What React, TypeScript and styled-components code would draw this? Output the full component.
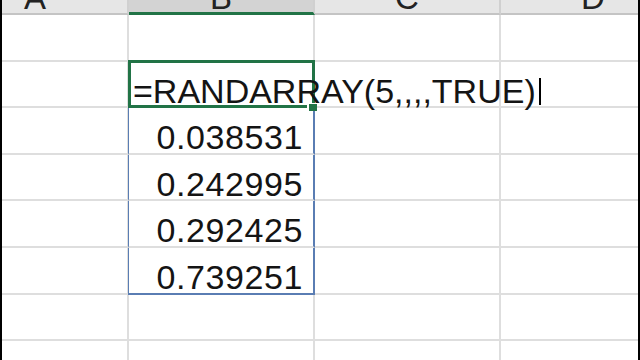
import * as React from 'react'
import styled, { createGlobalStyle, css } from 'styled-components'

const FONT = `'Liberation Sans', Arial, sans-serif`
const COL_W = 186
const ROW_H = 46.6

const GlobalStyle = createGlobalStyle`
  html, body {
    margin: 0;
    padding: 0;
    background: #ffffff;
    overflow: hidden;
  }
`

const columns = ['A', 'B', 'C', 'D']
const values = ['0.038531', '0.242995', '0.292425', '0.739251']

export default () => {
  return (
    <>
      <GlobalStyle />
      <Frame>
        <Sheet>
          {columns.map((c) => (
            <HeaderCell key={c} $active={c === 'B'}>
              <HeaderLetter>{c}</HeaderLetter>
            </HeaderCell>
          ))}

          {/* row 1 */}
          {columns.map((c) => (
            <Cell key={`1${c}`} />
          ))}

          {/* row 2 - formula being typed */}
          <Cell />
          <ActiveCell>
            <FormulaText>
              =RANDARRAY(5,,,,TRUE)
              <Caret />
            </FormulaText>
            <FillHandle />
          </ActiveCell>
          <Cell />
          <Cell />

          {/* spill rows */}
          {values.map((v, i) => (
            <React.Fragment key={v}>
              <Cell />
              <SpillCell $last={i === values.length - 1}>{v}</SpillCell>
              <Cell />
              <Cell />
            </React.Fragment>
          ))}

          {/* empty rows below */}
          {[7, 8].map((r) =>
            columns.map((c) => <Cell key={`${r}${c}`} />)
          )}
        </Sheet>
      </Frame>
    </>
  )
}

const Frame = styled.div`
  position: relative;
  width: 640px;
  height: 360px;
  overflow: hidden;
  background: #ffffff;
  border-left: 2px solid #000000;
  border-right: 2px solid #000000;
  box-sizing: border-box;
  font-family: ${FONT};
  color: #141414;
`

const Sheet = styled.div`
  display: grid;
  grid-template-columns: repeat(4, ${COL_W}px);
  grid-template-rows: 15px repeat(8, ${ROW_H}px);
  margin-left: -59px;
`

const HeaderCell = styled.div<{ $active?: boolean }>`
  position: relative;
  overflow: hidden;
  text-align: center;
  box-sizing: border-box;
  background: #e6e6e6;
  border-right: 2px solid #d0d0d0;
  border-bottom: 2px solid #c4c4c4;

  ${(p) =>
    p.$active &&
    css`
      background: #d3d3d3;
      border-bottom: 3px solid #217346;
    `}
`

const HeaderLetter = styled.span`
  display: block;
  font-size: 33px;
  line-height: 33px;
  margin-top: -19px;
  color: #222222;
`

const Cell = styled.div`
  box-sizing: border-box;
  border-right: 2px solid #dedede;
  border-bottom: 2px solid #dedede;
`

const ActiveCell = styled(Cell)`
  position: relative;
  z-index: 2;
  overflow: visible;
  white-space: nowrap;

  &::after {
    content: '';
    position: absolute;
    left: -1px;
    top: -2px;
    right: -2px;
    bottom: -2px;
    border: 3px solid #217346;
    pointer-events: none;
  }
`

const FormulaText = styled.div`
  position: relative;
  z-index: 3;
  display: flex;
  align-items: center;
  width: max-content;
  font-size: 34px;
  line-height: 37px;
  padding-top: 11px;
  padding-left: 4px;
`

const Caret = styled.span`
  display: inline-block;
  flex-shrink: 0;
  width: 2px;
  height: 27px;
  margin-left: 3px;
  margin-top: 1px;
  background: #000000;
`

const FillHandle = styled.span`
  position: absolute;
  right: -4px;
  bottom: -5px;
  width: 8px;
  height: 7px;
  background: #217346;
  border-left: 2px solid #ffffff;
  border-top: 1px solid #ffffff;
  z-index: 4;
`

const SpillCell = styled(Cell)<{ $last?: boolean }>`
  font-size: 34px;
  line-height: 37px;
  letter-spacing: 0.6px;
  padding-top: 11px;
  padding-right: 10px;
  text-align: right;
  border-left: 1px solid #5a7db3;
  border-right: 2px solid #5a7db3;
  margin-left: -1px;
  ${(p) =>
    p.$last &&
    css`
      border-bottom: 2px solid #5a7db3;
    `}
`
